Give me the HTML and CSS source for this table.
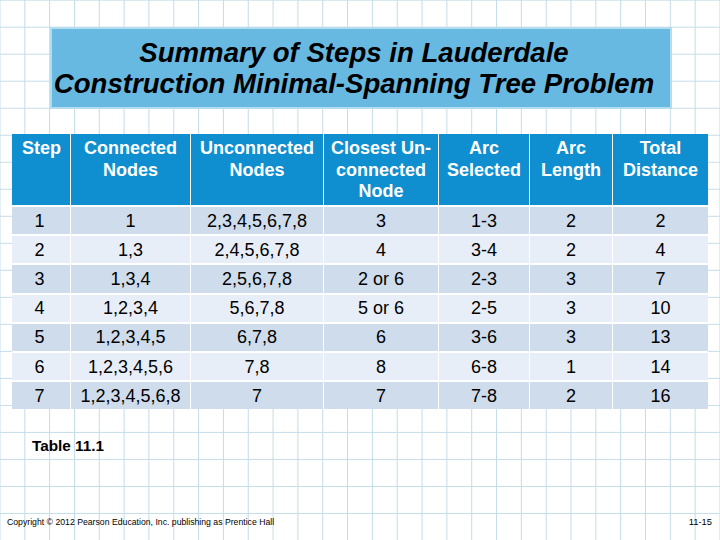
FILE: index.html
```html
<!DOCTYPE html>
<html lang="en">
<head>
<meta charset="utf-8">
<title>Summary of Steps in Lauderdale Construction Minimal-Spanning Tree Problem</title>
<link rel="stylesheet" href="styles.css">
</head>
<body>
<div class="slide">
  <h1 class="title">Summary of Steps in Lauderdale<br>Construction Minimal-Spanning Tree Problem</h1>
  <table class="steps">
    <colgroup>
      <col class="c-step">
      <col class="c-conn">
      <col class="c-unconn">
      <col class="c-close">
      <col class="c-arc">
      <col class="c-len">
      <col class="c-tot">
    </colgroup>
    <thead>
      <tr>
        <th class="h-step">Step</th>
        <th>Connected<br>Nodes</th>
        <th>Unconnected<br>Nodes</th>
        <th>Closest Un-<br>connected<br>Node</th>
        <th>Arc<br>Selected</th>
        <th>Arc<br>Length</th>
        <th>Total<br>Distance</th>
      </tr>
    </thead>
    <tbody>
      <tr class="odd"><td class="n-step">1</td><td>1</td><td>2,3,4,5,6,7,8</td><td>3</td><td>1-3</td><td>2</td><td>2</td></tr>
      <tr class="even"><td class="n-step">2</td><td>1,3</td><td>2,4,5,6,7,8</td><td>4</td><td>3-4</td><td>2</td><td>4</td></tr>
      <tr class="odd"><td class="n-step">3</td><td>1,3,4</td><td>2,5,6,7,8</td><td>2 or 6</td><td>2-3</td><td>3</td><td>7</td></tr>
      <tr class="even"><td class="n-step">4</td><td>1,2,3,4</td><td>5,6,7,8</td><td>5 or 6</td><td>2-5</td><td>3</td><td>10</td></tr>
      <tr class="odd"><td class="n-step">5</td><td>1,2,3,4,5</td><td>6,7,8</td><td>6</td><td>3-6</td><td>3</td><td>13</td></tr>
      <tr class="even"><td class="n-step">6</td><td>1,2,3,4,5,6</td><td>7,8</td><td>8</td><td>6-8</td><td>1</td><td>14</td></tr>
      <tr class="odd"><td class="n-step">7</td><td>1,2,3,4,5,6,8</td><td>7</td><td>7</td><td>7-8</td><td>2</td><td>16</td></tr>
    </tbody>
  </table>
  <p class="caption">Table 11.1</p>
  <div class="footer">
    <span class="copyright">Copyright © 2012 Pearson Education, Inc. publishing as Prentice Hall</span>
    <span class="pagenum">11-15</span>
  </div>
</div>
</body>
</html>
```

FILE: styles.css
```css
html, body {
  margin: 0;
  padding: 0;
}

body {
  width: 720px;
  height: 540px;
  overflow: hidden;
  background-color: #ffffff;
  background-image:
    linear-gradient(to right, #c3dce7 1px, transparent 1px),
    linear-gradient(to bottom, #c3dce7 1px, transparent 1px);
  background-size: 24.84px 100%, 100% 27.03px;
  background-position: 24.3px 0, 0 26.7px;
  font-family: "Liberation Sans", Arial, sans-serif;
  color: #000;
}

.slide {
  width: 720px;
  height: 540px;
  display: flex;
  flex-direction: column;
  align-items: flex-start;
}

.title {
  margin: 27px 0 0 50px;
  box-sizing: border-box;
  width: 622px;
  height: 82px;
  padding: 8px 14px 0 0;
  background: #68b9e1;
  border: 2px solid #b3dcef;
  font-size: 27.6px;
  line-height: 31px;
  font-weight: bold;
  font-style: italic;
  text-align: center;
  white-space: nowrap;
}

.steps {
  margin: 25px 0 0 12px;
  border-collapse: separate;
  border-spacing: 0;
  width: 696px;
  table-layout: fixed;
  font-size: 18px;
}

.c-step { width: 58px; }
.c-conn { width: 120px; }
.c-unconn { width: 133px; }
.c-close { width: 115px; }
.c-arc { width: 91px; }
.c-len { width: 83px; }
.c-tot { width: 96px; }

.steps thead tr {
  height: 71px;
}

.steps th {
  box-sizing: border-box;
  background: #108fd0;
  color: #ffffff;
  font-weight: bold;
  line-height: 21.5px;
  vertical-align: top;
  padding: 4px 0 0 0;
  text-align: center;
  white-space: nowrap;
  border-left: 1px solid #ffffff;
}

.steps th:first-child,
.steps td:first-child {
  border-left: none;
}

.steps th.h-step {
  text-align: left;
  padding-left: 10px;
}

.steps tbody tr {
  height: 29.2px;
}

.steps td {
  box-sizing: border-box;
  padding: 0;
  text-align: center;
  vertical-align: middle;
  line-height: 20px;
  white-space: nowrap;
  border-left: 1px solid #ffffff;
  border-top: 2px solid #ffffff;
}

.steps td.n-step {
  padding-right: 3px;
}

.steps tr.odd td {
  background: #cfdcec;
}

.steps tr.even td {
  background: #e8eef7;
}

.caption {
  margin: 28px 0 0 32px;
  font-size: 15.3px;
  font-weight: bold;
}

.footer {
  margin-top: auto;
  align-self: stretch;
  display: flex;
  justify-content: space-between;
  align-items: baseline;
  padding: 0 8px 13px 7px;
}

.copyright {
  font-size: 8.7px;
}

.pagenum {
  font-size: 9.4px;
}
```
